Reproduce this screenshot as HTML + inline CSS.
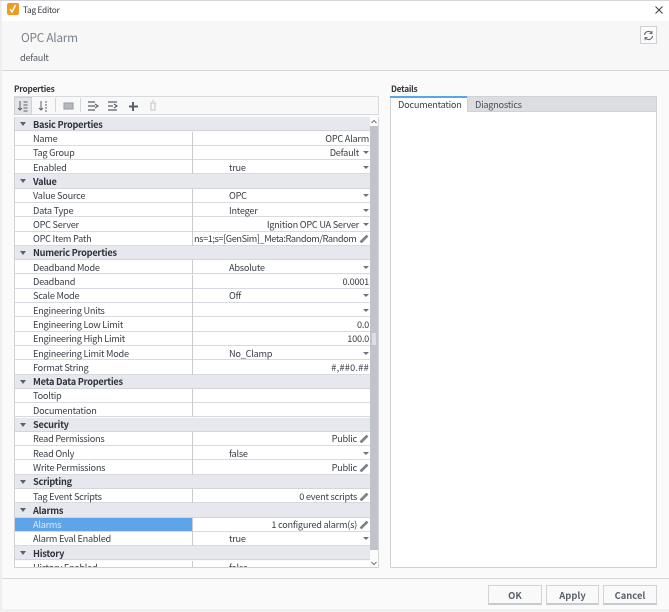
<!DOCTYPE html>
<html><head><meta charset="utf-8"><style>
html,body{margin:0;padding:0;width:669px;height:612px;overflow:hidden;background:#fafafa}
*{box-sizing:border-box}
body{font-family:"Noto Sans CJK JP","DejaVu Sans",sans-serif;font-size:9.2px;letter-spacing:-.25px;line-height:12px;color:#3a3f47;position:relative;filter:blur(.25px)}
.a{position:absolute}
.r{position:absolute;left:14px;width:356px;height:14.3px;background:#fff;border-bottom:1px solid #d8dadf}
.h{background:#e6e8ed;border-bottom:1px solid #d3d5da;font-weight:bold;color:#2f333a}
.h i{position:absolute;left:6px;top:5px;width:0;height:0;border-left:3.5px solid transparent;border-right:3.5px solid transparent;border-top:4px solid #5b6270}
.r .n{position:absolute;left:19px;top:.6px;white-space:nowrap}
.r .l{position:absolute;left:178px;top:0;width:1px;height:14.3px;background:#c9cbd0}
.r .v{position:absolute;left:215px;top:.6px;white-space:nowrap}
.r .w{position:absolute;right:1px;top:.6px;white-space:nowrap}
.r .w.d{right:11px}
.r .w.p{right:13px}
.r b.c{position:absolute;right:1px;top:5.5px;width:0;height:0;border-left:3.2px solid transparent;border-right:3.2px solid transparent;border-top:3.6px solid #6a7180}
.r svg{position:absolute;right:1px;top:1.5px}
.sel{background:#5fa3e8;color:#dbeafa}
.btn{position:absolute;top:585px;height:20px;background:#f9f9f9;border:1px solid #d2d3d6;border-bottom:2px solid #c9cacd;font-weight:bold;color:#5c626c;text-align:center;line-height:18px;font-size:9.4px;letter-spacing:0}
</style></head><body>
<div class="a" style="left:0;top:0;width:669px;height:1px;background:#d6d6d8"></div>
<div class="a" style="left:2px;top:1px;width:667px;height:20px;background:#fff"></div>
<div class="a" style="left:2px;top:21px;width:667px;height:49px;background:#f7f7f7"></div>
<div class="a" style="left:2px;top:70px;width:667px;height:1px;background:#d5d6da"></div>
<div class="a" style="left:0;top:1px;width:2px;height:609px;background:#eceef0"></div>
<div class="a" style="left:7px;top:3px;width:12px;height:12px;background:#ee9b22;border-radius:2px"></div>
<svg class="a" style="left:7px;top:3px" width="12" height="12"><path d="M3 6l2 3 3.5-7" fill="none" stroke="#fff" stroke-width="1.4"/></svg>
<div class="a" style="left:23px;top:4px;font-size:8.3px;color:#33373d;white-space:nowrap">Tag Editor</div>
<svg class="a" style="left:654px;top:5px" width="10" height="10"><path d="M1.5 1.5l7 7M8.5 1.500l-7 7" stroke="#3c3f44" stroke-width="1" fill="none"/></svg>
<div class="a" style="left:21px;top:30px;font-size:11.8px;line-height:15px;color:#7a818c;white-space:nowrap">OPC Alarm</div>
<div class="a" style="left:20px;top:51px;font-size:9.200px;color:#565b63;white-space:nowrap">default</div>
<div class="a" style="left:640px;top:26px;width:17px;height:18px;background:#fbfbfb;border:1px solid #cfd0d3"></div>
<svg class="a" style="left:643px;top:30px" width="11" height="11" fill="none" stroke="#5a5f68" stroke-width="1.1"><path d="M1.5 5A4 4 0 0 1 8.5 2.8M9.5 6A4 4 0 0 1 2.5 8.2"/><path d="M9 .8v2.6H6.4M2 10.200V7.600h2.600" stroke-width=".9"/></svg>

<div class="a" style="left:14px;top:82.500px;font-weight:bold;font-size:8.300px;color:#33373d">Properties</div>
<div class="a" style="left:391px;top:82.500px;font-weight:bold;font-size:8.300px;color:#33373d">Details</div>

<div class="a" style="left:14px;top:96px;width:365px;height:19px;background:#f8f8f8;border:1px solid #d9dadd"></div>
<div class="a" style="left:14px;top:97px;width:18px;height:18px;background:#e3e5e9;border:1px solid #cfd1d5"></div>
<div class="a" style="left:55px;top:98px;width:1px;height:14px;background:#d4d5d8"></div>
<div class="a" style="left:80px;top:98px;width:1px;height:14px;background:#d4d5d8"></div>
<svg class="a" style="left:14px;top:97px" width="150" height="18" fill="none" stroke="#59606c" stroke-width="1.1">
<path d="M6 4v9M4 11l2 2 2-2M9.500 5h4M9.500 8h4M9.500 11h4M9.500 14h4" stroke-width="1"/>
<path d="M27 4v9M25 11l2 2 2-2M31 5h2M31 8h2M31 11h2M31 14h2" stroke-width="1"/>
<rect x="50" y="6" width="9" height="6" fill="#b4b8bf" stroke="#9a9ea7"/>
<path d="M74 5h7M74 9h7M74 13h7M81 7l3 2-3 2" stroke-width="1.2"/>
<path d="M94 5h9M94 9h5M94 13h9M100 7l3 2-3 2" stroke-width="1.2"/>
<path d="M119 5v9M115 9.500h9" stroke-width="2"/>
<path d="M136 6h6M137 6v7h4V6M138 4h2" stroke="#c3c5ca" stroke-width="1"/>
</svg>

<div class="r h" style="top:117.2px"><i></i><span class="n">Basic Properties</span></div>
<div class="r" style="top:131.5px"><span class="n">Name</span><span class="l"></span><span class="w">OPC Alarm</span></div>
<div class="r" style="top:145.8px"><span class="n">Tag Group</span><span class="l"></span><span class="w d">Default</span><b class="c"></b></div>
<div class="r" style="top:160.1px"><span class="n">Enabled</span><span class="l"></span><span class="v">true</span><b class="c"></b></div>
<div class="r h" style="top:174.4px"><i></i><span class="n">Value</span></div>
<div class="r" style="top:188.7px"><span class="n">Value Source</span><span class="l"></span><span class="v">OPC</span><b class="c"></b></div>
<div class="r" style="top:203px"><span class="n">Data Type</span><span class="l"></span><span class="v">Integer</span><b class="c"></b></div>
<div class="r" style="top:217.3px"><span class="n">OPC Server</span><span class="l"></span><span class="w d">Ignition OPC UA Server</span><b class="c"></b></div>
<div class="r" style="top:231.6px"><span class="n">OPC Item Path</span><span class="l"></span><span class="v" style="left:180px;width:163px;overflow:hidden;letter-spacing:-.42px">ns=1;s=[GenSim]_Meta:Random/Random</span><svg width="10" height="10" fill="none" stroke="#777c86" stroke-width="1.3"><path d="M1.500 8.500l6-6 1 1-6 6z"/></svg></div>
<div class="r h" style="top:245.9px"><i></i><span class="n">Numeric Properties</span></div>
<div class="r" style="top:260.2px"><span class="n">Deadband Mode</span><span class="l"></span><span class="v">Absolute</span><b class="c"></b></div>
<div class="r" style="top:274.5px"><span class="n">Deadband</span><span class="l"></span><span class="w">0.0001</span></div>
<div class="r" style="top:288.8px"><span class="n">Scale Mode</span><span class="l"></span><span class="v">Off</span><b class="c"></b></div>
<div class="r" style="top:303.1px"><span class="n">Engineering Units</span><span class="l"></span><b class="c"></b></div>
<div class="r" style="top:317.4px"><span class="n">Engineering Low Limit</span><span class="l"></span><span class="w">0.0</span></div>
<div class="r" style="top:331.7px"><span class="n">Engineering High Limit</span><span class="l"></span><span class="w">100.0</span></div>
<div class="r" style="top:346px"><span class="n">Engineering Limit Mode</span><span class="l"></span><span class="v">No_Clamp</span><b class="c"></b></div>
<div class="r" style="top:360.3px"><span class="n">Format String</span><span class="l"></span><span class="w" style="letter-spacing:.25px">#,##0.##</span></div>
<div class="r h" style="top:374.6px"><i></i><span class="n">Meta Data Properties</span></div>
<div class="r" style="top:388.9px"><span class="n">Tooltip</span><span class="l"></span></div>
<div class="r" style="top:403.2px"><span class="n">Documentation</span><span class="l"></span></div>
<div class="r h" style="top:417.5px"><i></i><span class="n">Security</span></div>
<div class="r" style="top:431.8px"><span class="n">Read Permissions</span><span class="l"></span><span class="w p">Public</span><svg width="10" height="10" fill="none" stroke="#777c86" stroke-width="1.3"><path d="M1.500 8.500l6-6 1 1-6 6z"/></svg></div>
<div class="r" style="top:446.1px"><span class="n">Read Only</span><span class="l"></span><span class="v">false</span><b class="c"></b></div>
<div class="r" style="top:460.4px"><span class="n">Write Permissions</span><span class="l"></span><span class="w p">Public</span><svg width="10" height="10" fill="none" stroke="#777c86" stroke-width="1.3"><path d="M1.500 8.500l6-6 1 1-6 6z"/></svg></div>
<div class="r h" style="top:474.7px"><i></i><span class="n">Scripting</span></div>
<div class="r" style="top:489px"><span class="n">Tag Event Scripts</span><span class="l"></span><span class="w p">0 event scripts</span><svg width="10" height="10" fill="none" stroke="#777c86" stroke-width="1.3"><path d="M1.500 8.500l6-6 1 1-6 6z"/></svg></div>
<div class="r h" style="top:503.3px"><i></i><span class="n">Alarms</span></div>
<div class="r" style="top:517.6px"><span class="a sel" style="left:0;top:0;width:178px;height:13.3px"></span><span class="n" style="color:#dbeafa">Alarms</span><span class="l"></span><span class="w p">1 configured alarm(s)</span><svg width="10" height="10" fill="none" stroke="#777c86" stroke-width="1.3"><path d="M1.500 8.500l6-6 1 1-6 6z"/></svg></div>
<div class="r" style="top:531.9px"><span class="n">Alarm Eval Enabled</span><span class="l"></span><span class="v">true</span><b class="c"></b></div>
<div class="r h" style="top:546.2px"><i></i><span class="n">History</span></div>
<div class="r" style="top:560.5px;height:7px;overflow:hidden;border-bottom:none"><span class="n">History Enabled</span><span class="l"></span><span class="v">false</span></div>

<div class="a" style="left:14px;top:117px;width:1px;height:451px;background:#cfd1d5"></div>
<div class="a" style="left:14px;top:567px;width:365px;height:1px;background:#cfd1d5"></div>
<div class="a" style="left:378px;top:117px;width:1px;height:451px;background:#d3d5d9"></div>
<div class="a" style="left:370px;top:117px;width:8px;height:450px;background:#fbfbfb"></div>
<div class="a" style="left:370px;top:126px;width:8px;height:424px;background:#c0c3ca"></div>
<div class="a" style="left:372px;top:333px;width:4px;height:12px;background:#dcdee2"></div>
<svg class="a" style="left:370px;top:118px" width="8" height="7" fill="none" stroke="#6f7580" stroke-width="1"><path d="M1.500 5l2.500-2.500 2.500 2.500"/></svg>
<svg class="a" style="left:370px;top:560px" width="8" height="7" fill="none" stroke="#6f7580" stroke-width="1"><path d="M1.500 2l2.500 2.500 2.500-2.500"/></svg>

<div class="a" style="left:390px;top:96px;width:267px;height:472px;background:#fff;border:1px solid #cfd1d5"></div>
<div class="a" style="left:467px;top:96px;width:190px;height:16px;background:#dcdde1;border:1px solid #cfd1d5"></div>
<div class="a" style="left:390px;top:95.500px;width:77px;height:2px;background:#5da3e8"></div>
<div class="a" style="left:398px;top:98px;font-size:9.200px;color:#3a3f47;white-space:nowrap">Documentation</div>
<div class="a" style="left:475px;top:98px;font-size:9.200px;color:#4a505a;white-space:nowrap">Diagnostics</div>

<div class="a" style="left:2px;top:578px;width:667px;height:1px;background:#d8d9dc"></div>
<div class="btn" style="left:488px;width:54px">OK</div>
<div class="btn" style="left:546px;width:53px">Apply</div>
<div class="btn" style="left:603px;width:54px">Cancel</div>
<div class="a" style="left:0;top:609px;width:669px;height:3px;background:#f1f1f1"></div>
</body></html>
